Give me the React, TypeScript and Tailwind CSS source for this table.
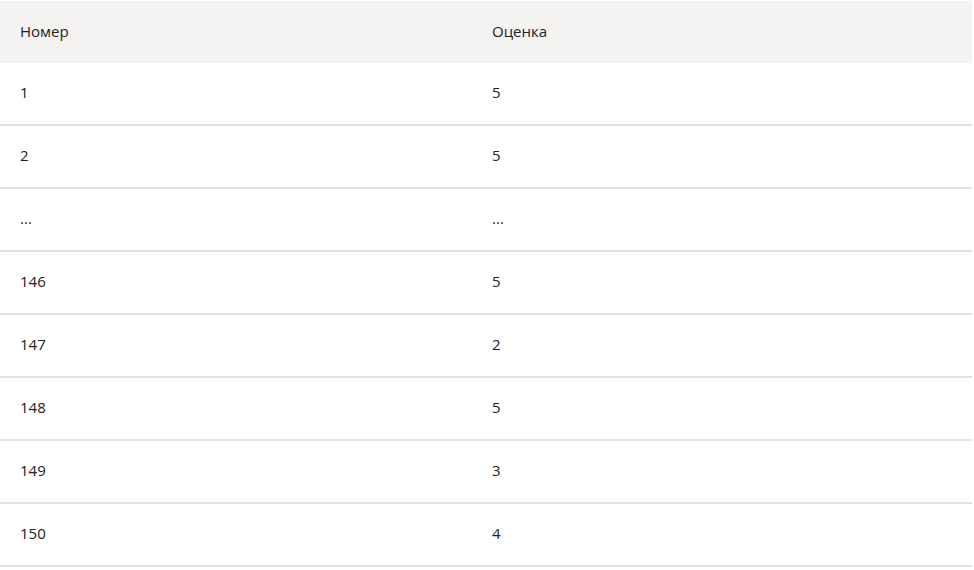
const rows: [string, string][] = [
  ["1", "5"],
  ["2", "5"],
  ["...", "..."],
  ["146", "5"],
  ["147", "2"],
  ["148", "5"],
  ["149", "3"],
  ["150", "4"],
]

export default function App() {
  return (
    <div className="w-[974px] h-[570px] bg-white pt-px font-['Open_Sans','Noto_Sans',sans-serif] text-[15px] text-[#222]">
      <div className="w-[972px]">
        <div className="grid grid-cols-[492px_1fr] h-[62px] items-center pb-[2px] bg-[#f4f3f1]">
          <div className="pl-5">Номер</div>
          <div>Оценка</div>
        </div>
        {rows.map(([num, mark], i) => (
          <div
            key={i}
            className="grid grid-cols-[492px_1fr] h-[63px] items-center pb-[2px] border-b-2 border-[#e2e2e0]"
          >
            <div className="pl-5">{num}</div>
            <div>{mark}</div>
          </div>
        ))}
      </div>
    </div>
  )
}
